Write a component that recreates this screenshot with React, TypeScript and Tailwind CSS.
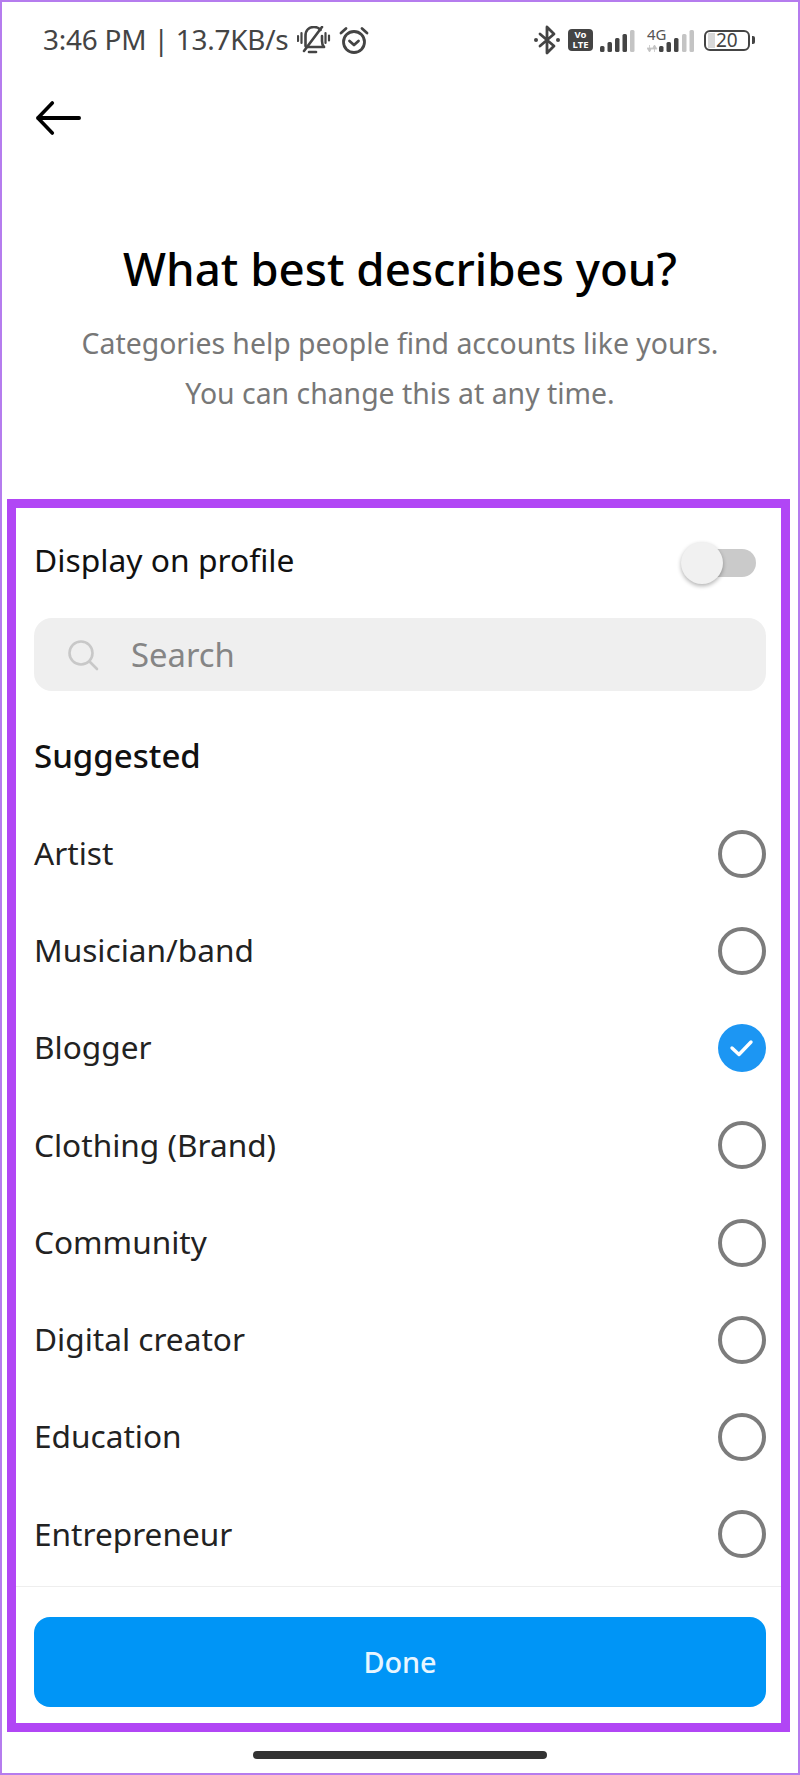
const font = { fontFamily: '"Noto Sans", sans-serif' };

const items = ["Artist", "Musician/band", "Blogger", "Clothing (Brand)", "Community", "Digital creator", "Education", "Entrepreneur"];

function StatusBar() {
  return (
    <div className="flex h-[76px] items-center text-[#444444]">
      <span className="ml-[41px] w-[248px] whitespace-nowrap text-[27.900px] leading-none tracking-[-0.200px]">3:46 PM | 13.7KB/s</span>
      <svg width="36" height="28" viewBox="0 0 36 28" fill="none" stroke="#444444" strokeWidth="2.600" strokeLinecap="round" strokeLinejoin="round" className="ml-[6px]">
        <path d="M8.500 20V10c0-6 4-9 8.500-9 3 0 5 1 6.500 3M25 10v5c0 3 1 5 2 6H9" />
        <path d="M25 1L7 25" />
        <path d="M12 26h7" />
        <path d="M1 10v5M4.500 7v10M28.500 7v10M32 9.500v5" strokeWidth="2.200" />
      </svg>
      <svg width="30" height="29" viewBox="0 0 30 29" fill="none" stroke="#444444" strokeWidth="2.800" strokeLinecap="round" strokeLinejoin="round" className="ml-[6px]">
        <circle cx="15" cy="16" r="10.500" />
        <path d="M10.500 15l4.500 4 4.500-4M2 7l5-4.500M28 7l-5-4.500" />
      </svg>
      <svg width="28" height="30" viewBox="0 0 28 30" fill="none" stroke="#444444" strokeWidth="2.800" strokeLinejoin="round" strokeLinecap="round" className="ml-[164px]">
        <path d="M7 9l14 12-7 7V2l7 7L7 21" />
        <circle cx="3" cy="15" r="2" fill="#444444" stroke="none" />
        <circle cx="25" cy="15" r="2" fill="#444444" stroke="none" />
      </svg>
      <div className="ml-[7px] flex h-[22px] w-[25px] flex-col items-center justify-center rounded-[4px] bg-[#444444] text-[9.500px] font-bold leading-[10px] text-white">
        <span>Vo</span>
        <span>LTE</span>
      </div>
      <svg width="35" height="22" viewBox="0 0 35 22" className="ml-[7px] mt-[1px]">
        <rect x="0" y="16" width="4.500" height="6" rx="1.500" fill="#444444" />
        <rect x="7.500" y="12" width="4.500" height="10" rx="1.500" fill="#444444" />
        <rect x="15" y="8" width="4.500" height="14" rx="1.500" fill="#444444" />
        <rect x="22.500" y="4" width="4.500" height="18" rx="1.500" fill="#444444" />
        <rect x="30" y="0" width="4.500" height="22" rx="1.500" fill="#c4c4c4" />
      </svg>
      <div className="relative ml-[12px] mt-[1px] h-[22px] w-[48px]">
        <svg width="48" height="22" viewBox="0 0 48 22">
          <path d="M2.500 15v7M2.500 22L0 18h5zM7.500 22v-7M7.500 15l-2.500 4h5z" fill="#c4c4c4" stroke="#c4c4c4" strokeWidth="0.800" />
          <rect x="12" y="16" width="4.500" height="6" rx="1.500" fill="#444444" />
          <rect x="19.500" y="12" width="4.500" height="10" rx="1.500" fill="#444444" />
          <rect x="27" y="8" width="4.500" height="14" rx="1.500" fill="#444444" />
          <rect x="35" y="4" width="4.500" height="18" rx="1.500" fill="#c4c4c4" />
          <rect x="42.500" y="0" width="4.500" height="22" rx="1.500" fill="#c4c4c4" />
        </svg>
        <span className="absolute -top-[3px] left-0 text-[15px] leading-[15px] text-[#555555]">4G</span>
      </div>
      <div className="ml-[9px] flex h-[21px] w-[46px] items-center rounded-[6px] border-2 border-[#444444] bg-white">
        <div className="ml-[2px] h-[15px] w-[7px] bg-[#d8d8d8]" />
        <span className="ml-[1px] text-[19px] leading-none">20</span>
      </div>
      <div className="ml-[2px] h-[8px] w-[3px] rounded-r-[2px] bg-[#444444]" />
    </div>
  );
}

function Radio({ checked }: { checked?: boolean }) {
  if (checked) {
    return (
      <div className="flex h-[48px] w-[48px] items-center justify-center rounded-full bg-[#1c96f3]">
        <svg width="26" height="20" viewBox="0 0 26 20" fill="none" stroke="white" strokeWidth="3.400" strokeLinecap="round" strokeLinejoin="round">
          <path d="M3 10l7 6.500L22 4" />
        </svg>
      </div>
    );
  }
  return <div className="h-[48px] w-[48px] rounded-full border-[4.500px] border-[#7c7c7c]" />;
}

export default function App() {
  return (
    <div className="h-[1775px] w-[800px] border-2 border-[#b57cee] bg-white" style={font}>
      <StatusBar />
      <div className="flex h-[80px] items-center pl-[33px]">
        <svg width="48" height="36" viewBox="0 0 48 36" fill="none" stroke="#000000" strokeWidth="3.800" strokeLinecap="round" strokeLinejoin="round">
          <path d="M3 18h43M18 3L3 18l15 15" transform="scale(0.960 1)" />
        </svg>
      </div>
      <h1 className="mt-[80px] h-[60px] text-center text-[45.700px] font-medium leading-[60px] text-black">What best describes you?</h1>
      <div className="mt-[20px] text-center text-[28.400px] leading-[50px] text-[#777777]">
        <p>Categories help people find accounts like yours.</p>
        <p>You can change this at any time.</p>
      </div>
      <section className="ml-[5px] mt-[81px] h-[1233px] w-[783px] border-[9px] border-[#b146f5]">
        <div className="flex h-[110px] items-center justify-between pl-[18px] pr-[25px]">
          <span className="pb-[6px] text-[31.800px] leading-none text-[#111111]">Display on profile</span>
          <div className="relative h-[28px] w-[66px] rounded-full bg-[#cacaca]">
            <div className="absolute -left-[9px] -top-[7px] h-[42px] w-[42px] rounded-full bg-[#f1f1f1] shadow-[0_2px_4px_rgba(0,0,0,0.3)]" />
          </div>
        </div>
        <div className="ml-[18px] mr-[15px] flex h-[73px] items-center rounded-[18px] bg-[#efefef] pl-[34px]">
          <svg width="32" height="32" viewBox="0 0 32 32" fill="none" stroke="#c8c8c8" strokeWidth="2.600" strokeLinecap="round" className="-ml-[1px]">
            <circle cx="14" cy="14" r="11.500" />
            <path d="M22.500 22.500l7.500 7.500" />
          </svg>
          <span className="ml-[32px] pt-[2px] text-[32.800px] leading-none text-[#858585]">Search</span>
        </div>
        <h2 className="ml-[18px] mt-[36px] h-[60px] text-[33px] font-medium leading-[58px] text-[#111111]">Suggested</h2>
        <ul className="mt-[18px] pl-[18px] pr-[15px]">
          {items.map((t) => (
            <li key={t} className="flex h-[97.250px] items-center justify-between">
              <span className="pb-[2px] text-[31.600px] leading-none text-[#222222]">{t}</span>
              <Radio checked={t === "Blogger"} />
            </li>
          ))}
        </ul>
        <div className="mt-[3px] border-t border-[#eeeeee] pl-[18px] pr-[15px] pt-[30px]">
          <button className="flex h-[90px] w-full items-center justify-center rounded-[16px] bg-[#0095f6] text-[28.800px] font-medium leading-none text-[#e8f6ff]">Done</button>
        </div>
      </section>
      <div className="mx-auto mt-[19px] h-[8px] w-[294px] rounded-full bg-[#333333]" />
    </div>
  );
}
